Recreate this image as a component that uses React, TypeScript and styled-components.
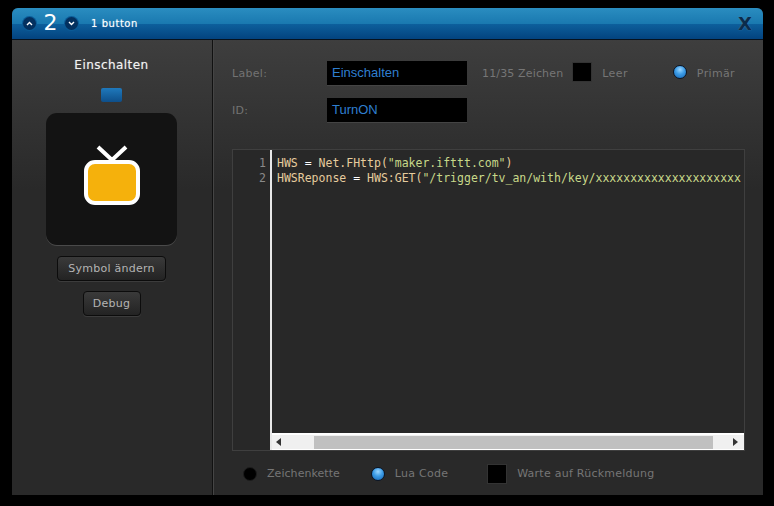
import React from "react";
import styled, { createGlobalStyle } from "styled-components";

const Global = createGlobalStyle`
  html, body { margin: 0; padding: 0; background: #000; }
  body { width: 774px; height: 506px; overflow: hidden; font-family: "DejaVu Sans", Verdana, sans-serif; }
`;

const Page = styled.div`
  padding: 8px 11px 11px 12px;
  width: 774px;
  height: 506px;
  box-sizing: border-box;
`;
const Win = styled.div`
  height: 487px;
  display: flex;
  flex-direction: column;
  border-radius: 6px 6px 0 0;
  overflow: hidden;
  background: #292929;
`;
const Header = styled.header`
  height: 31px;
  flex: none;
  display: flex;
  align-items: center;
  padding: 0 11px 0 11px;
  border-bottom: 1px solid #06121f;
  background: linear-gradient(#2a8dc0 0%, #1a79b0 50%, #0d5f9c 52%, #03437f 100%);
  color: #fff;
`;
const RoundBtn = styled.span`
  width: 13px;
  height: 13px;
  border-radius: 50%;
  background: #03305f;
  box-shadow: 0 0 0 1px #0b5c98;
  display: flex;
  align-items: center;
  justify-content: center;
`;
const Num = styled.span`
  font-size: 22px;
  line-height: 1;
  width: 29px;
  text-align: center;
  margin-top: -1px;
`;
const HeaderTitle = styled.span`
  font-size: 10px;
  letter-spacing: 0.55px;
  margin-left: 13px;
  flex: 1;
  text-shadow: 0 0 1px #ffffff80;
`;
const Close = styled.span`
  font-family: "DejaVu Sans", sans-serif;
  font-size: 18px;
  font-weight: 700;
  color: #0a2c4c;
  text-shadow: 0 0 1px #5f8fb0;
`;
const Body = styled.div`
  flex: 1;
  display: flex;
  min-height: 0;
  background: linear-gradient(#3e3e3e 0, #292929 150px);
`;
const Side = styled.aside`
  width: 201px;
  flex: none;
  display: flex;
  flex-direction: column;
  align-items: center;
  padding: 17px 1px 0 0;
  box-sizing: border-box;
  border-right: 1px solid #111;
  box-shadow: 1px 0 0 #454545;
`;
const SideTitle = styled.div`
  font-size: 12px;
  color: #f2f2f2;
  line-height: 16px;
  letter-spacing: 0.45px;
  text-shadow: 0 0 1px #ffffff70;
`;
const Led = styled.div`
  width: 21px;
  height: 14px;
  margin-top: 15px;
  border-radius: 2px;
  background: linear-gradient(#1f79bc, #0e4f8a);
`;
const IconBox = styled.div`
  width: 131px;
  height: 132px;
  margin-top: 11px;
  border-radius: 11px;
  background: #131313;
  box-shadow: 0 1px 0 #4a4a4a;
  display: flex;
  align-items: center;
  justify-content: center;
  padding-bottom: 8px;
  box-sizing: border-box;
`;
const Btn = styled.button`
  display: block;
  height: 25px;
  width: ${(p) => p.$w}px;
  margin-top: ${(p) => p.$top}px;
  padding: 0;
  border: 1px solid #0c0c0c;
  border-radius: 4px;
  background: linear-gradient(#3a3a3a, #232323);
  box-shadow: 0 1px 0 #3c3c3c;
  color: #b4b4b4;
  font: 11px "DejaVu Sans", Verdana, sans-serif;
  letter-spacing: 0.25px;
`;
const Main = styled.main`
  flex: 1;
  min-width: 0;
  padding: 21px 18px 0 19px;
  display: flex;
  flex-direction: column;
`;
const Row = styled.div`
  display: flex;
  align-items: center;
  height: 25px;
  margin-bottom: 12px;
`;
const FieldLabel = styled.label`
  width: 95px;
  font-size: 11px;
  letter-spacing: 0.3px;
  color: #737373;
  padding-bottom: 1px;
`;
const Input = styled.div`
  height: 24px;
  background: #000;
  border-bottom: 1px solid #444;
  color: #2f7fd0;
  font: 13px/24px "Liberation Sans", Arial, sans-serif;
  padding-left: 5px;
  width: 135px;
`;
const Hint = styled.span`
  font-size: 11px;
  color: #767676;
  padding-bottom: 1px;
  letter-spacing: ${(p) => p.$ls ?? 0.15}px;
  margin-left: ${(p) => p.$left || 0}px;
`;
const Check = styled.span`
  width: 18px;
  height: 18px;
  flex: none;
  background: #000;
  box-shadow: 0 0 0 1px #333;
  margin-left: ${(p) => p.$left || 0}px;
  margin-bottom: ${(p) => p.$mb || 0}px;
`;
const Radio = styled.span`
  width: 14px;
  height: 14px;
  flex: none;
  border-radius: 50%;
  box-sizing: border-box;
  background: ${(p) =>
    p.$on
      ? "radial-gradient(circle at 50% 30%, #9ad6ff 0, #3b9be6 45%, #1766b4 100%)"
      : "#000"};
  border: ${(p) => (p.$on ? "1.5px solid #0a1526" : "1px solid #1c1c1c")};
  margin-left: ${(p) => p.$left || 0}px;
  margin-bottom: ${(p) => p.$mb || 0}px;
`;
const Editor = styled.div`
  height: 302px;
  margin-top: 14px;
  width: 513px;
  box-sizing: border-box;
  flex: none;
  border: 1px solid #3f3f3f;
  display: flex;
  background: #282828;
`;
const Gutter = styled.div`
  width: 39px;
  flex: none;
  text-align: right;
  padding: 6px 4px 0 0;
  box-sizing: border-box;
  font: 11.5px/15px "DejaVu Sans Mono", monospace;
  color: #8a8a8a;
  border-right: 2px solid #e8e8e8;
`;
const CodeCol = styled.div`
  flex: 1;
  min-width: 0;
  display: flex;
  flex-direction: column;
`;
const Code = styled.pre`
  flex: 1;
  margin: 0;
  overflow: hidden;
  padding: 6px 0 0 5px;
  font: 11.5px/15px "DejaVu Sans Mono", monospace;
  color: #e6cc9e;
`;
const Tok = styled.span`
  color: ${(p) => p.$c};
`;
const Scroll = styled.div`
  height: 17px;
  flex: none;
  background: #f0f0f0;
  border-top: 2px solid #fff;
  border-bottom: 1px solid #fff;
  box-sizing: border-box;
  display: flex;
  align-items: center;
`;
const Arrow = styled.span`
  width: 0;
  height: 0;
  margin-left: ${(p) => p.$ml}px;
  border-top: 4px solid transparent;
  border-bottom: 4px solid transparent;
  ${(p) => (p.$dir === "l" ? "border-right: 5px solid #333;" : "border-left: 5px solid #333;")}
`;
const Thumb = styled.span`
  height: 13px;
  width: 399px;
  margin-left: 33px;
  background: #c0c0c0;
`;
const Footer = styled.div`
  display: flex;
  align-items: center;
  height: 20px;
  margin-top: 13px;
  padding-left: 11px;
`;

const Up = () => (
  <svg width="7" height="5" viewBox="0 0 7 5"><path d="M1 4 L3.5 1.5 L6 4" stroke="#fff" strokeWidth="1.4" fill="none" /></svg>
);
const Down = () => (
  <svg width="7" height="5" viewBox="0 0 7 5"><path d="M1 1 L3.5 3.5 L6 1" stroke="#fff" strokeWidth="1.4" fill="none" /></svg>
);
const Tv = () => (
  <svg width="56" height="60" viewBox="0 0 56 60">
    <path d="M14 2 L28 15 L42 2" stroke="#fff" strokeWidth="4" fill="none" />
    <rect x="2" y="17" width="52" height="41" rx="9" fill="#f5b10c" stroke="#fff" strokeWidth="4" />
  </svg>
);

export default function App() {
  return (
    <Page>
      <Global />
      <Win>
        <Header>
          <RoundBtn><Up /></RoundBtn>
          <Num>2</Num>
          <RoundBtn><Down /></RoundBtn>
          <HeaderTitle>1 button</HeaderTitle>
          <Close>X</Close>
        </Header>
        <Body>
          <Side>
            <SideTitle>Einschalten</SideTitle>
            <Led />
            <IconBox><Tv /></IconBox>
            <Btn $w={109} $top={11}>Symbol ändern</Btn>
            <Btn $w={58} $top={10}>Debug</Btn>
          </Side>
          <Main>
            <Row>
              <FieldLabel>Label:</FieldLabel>
              <Input>Einschalten</Input>
              <Hint $left={15}>11/35 Zeichen</Hint>
              <Check $left={10} $mb={3} />
              <Hint $left={11} $ls={0.4}>Leer</Hint>
              <Radio $on $left={45} $mb={4} />
              <Hint $left={10} $ls={0.35}>Primär</Hint>
            </Row>
            <Row>
              <FieldLabel>ID:</FieldLabel>
              <Input>TurnON</Input>
            </Row>
            <Editor>
              <Gutter>1<br />2</Gutter>
              <CodeCol>
                <Code>
                  HWS <Tok $c="#fff">=</Tok> Net.FHttp(<Tok $c="#c8d98a">"maker.ifttt.com"</Tok>){"\n"}
                  HWSReponse <Tok $c="#fff">=</Tok> HWS:GET(<Tok $c="#c8d98a">"/trigger/tv_an/with/key/xxxxxxxxxxxxxxxxxxxxx</Tok>
                </Code>
                <Scroll>
                  <Arrow $dir="l" $ml={4} />
                  <Thumb />
                  <Arrow $dir="r" $ml={20} />
                </Scroll>
              </CodeCol>
            </Editor>
            <Footer>
              <Radio />
              <Hint $left={10} $ls={0.05}>Zeichenkette</Hint>
              <Radio $on $left={31} />
              <Hint $left={10} $ls={0.25}>Lua Code</Hint>
              <Check $left={40} $mb={1} />
              <Hint $left={11} $ls={0.25}>Warte auf Rückmeldung</Hint>
            </Footer>
          </Main>
        </Body>
      </Win>
    </Page>
  );
}
